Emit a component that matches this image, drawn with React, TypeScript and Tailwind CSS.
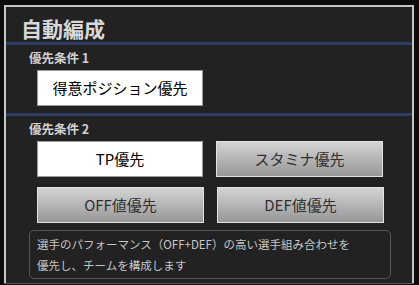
export default function App() {
    const font = { fontFamily: '"Noto Sans CJK JP", "Noto Sans", sans-serif' };
    const whiteBtn =
        "w-[166px] h-[36px] flex items-center justify-center bg-white border border-[#9a9a9a] text-black text-[15px]";
    const grayBtn =
        "w-[167px] h-[36px] flex items-center justify-center bg-gradient-to-b from-[#d4d4d4] to-[#979797] border border-[#e2e2e2] text-[#303030] text-[15px]";

    return (
        <div
            className="w-[419px] h-[285px] overflow-hidden bg-[#0c0c0c] pt-[5px] pl-[4px] pr-[5px]"
            style={font}
        >
            {/* Panel */}
            <div className="h-[278px] border-2 border-b-0 border-[#c6c6c6] bg-[#222222] flex flex-col">
                {/* Title */}
                <div className="h-[35px] pl-[15px] flex items-end">
                    <h1 className="text-[21px] leading-[28px] font-bold text-[#d8d8d8]">自動編成</h1>
                </div>
                <div className="h-[3px] bg-[#2c3e64]" />

                {/* Condition 1 */}
                <div className="pt-[5px] pb-[7px]">
                    <p className="pl-[23px] h-[15px] leading-[15px] text-[12.5px] font-bold text-[#d0d0d0]">
                        優先条件 1
                    </p>
                    <div className="mt-[5px] pl-[31px]">
                        <div className={whiteBtn}>得意ポジション優先</div>
                    </div>
                </div>
                <div className="h-[3px] bg-[#2c3e64]" />

                {/* Condition 2 */}
                <div className="pt-[5px]">
                    <p className="pl-[23px] h-[15px] leading-[15px] text-[12.5px] font-bold text-[#d0d0d0]">
                        優先条件 2
                    </p>
                    <div className="mt-[5px] pl-[31px] flex flex-col gap-[10px]">
                        <div className="flex gap-[13px]">
                            <div className={whiteBtn}>TP優先</div>
                            <div className={grayBtn}>スタミナ優先</div>
                        </div>
                        <div className="flex gap-[13px]">
                            <div className={grayBtn}>OFF値優先</div>
                            <div className={grayBtn}>DEF値優先</div>
                        </div>
                    </div>
                    <div className="mt-[7px] ml-[23px] w-[362px] h-[49px] rounded-[5px] border border-[#555555] bg-[#222222] px-[7px] pt-[3px] text-[11.5px] leading-[21px] text-[#c6c6c6]">
                        <p>選手のパフォーマンス（OFF+DEF）の高い選手組み合わせを</p>
                        <p>優先し、チームを構成します</p>
                    </div>
                </div>
            </div>
            <div className="h-[1px] bg-[#5a5a5a]" />
        </div>
    );
}
